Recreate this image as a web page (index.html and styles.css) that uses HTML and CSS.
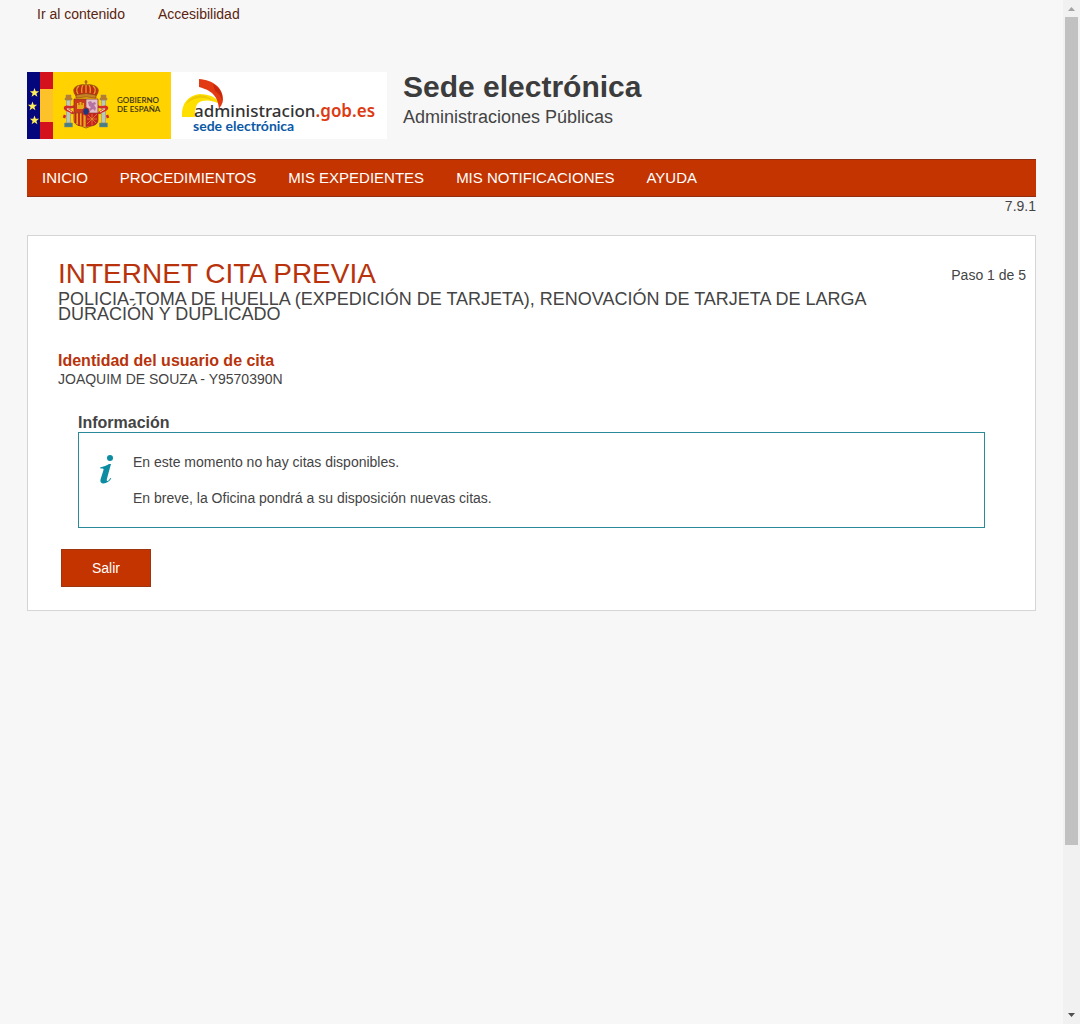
FILE: index.html
```html
<!DOCTYPE html>
<html lang="es">
<head>
<meta charset="utf-8">
<meta name="viewport" content="width=device-width, initial-scale=1">
<title>Sede electrónica - Internet cita previa</title>
<link rel="stylesheet" href="styles.css">
</head>
<body>
<div class="page">
  <nav class="skip-links">
    <a href="#contenido">Ir al contenido</a>
    <a href="#accesibilidad">Accesibilidad</a>
  </nav>

  <header class="site-header">
    <svg class="logo-gobierno" width="144" height="67" viewBox="0 0 144 67" role="img" aria-label="Gobierno de España">
      <rect width="144" height="67" fill="#ffd200"/>
      <rect width="13" height="67" fill="#04077b"/>
      <rect x="13" width="13" height="67" fill="#fdc22a"/>
      <rect x="13" width="13" height="17" fill="#d4121d"/>
      <rect x="13" y="50" width="13" height="17" fill="#d4121d"/>
      <g fill="#ffee5c">
        <path id="star" d="M7.500 16l1.200 3.200 3.400.1-2.700 2.100 1 3.300-2.900-1.900-2.900 1.900 1-3.300-2.700-2.100 3.400-.1z"/>
        <use href="#star" x="-2" y="13.500"/>
        <use href="#star" y="27.500"/>
      </g>
      <g stroke="#8a8a78" stroke-width=".5">
        <path fill="#bcc8bd" d="M39.500 28h4v23h-4zM74.500 28h4v23h-4z"/>
        <path fill="#477e85" d="M37.500 51h8v4h-8zM72.500 51h8v4h-8z"/>
        <path fill="#bd7b26" d="M39 23h5v3h1v2h-7v-2h1zM74 23h5v3h1v2h-7v-2h1z"/>
      </g>
      <g fill="none" stroke="#d42b25" stroke-width="2.500">
        <path d="M48 34c-4 3-10-1-10 2s7 2 8 6M70 34c4 3 10-1 10 2s-7 2-8 6"/>
        <path d="M38 43l-1 3M80 43l1 3"/>
      </g>
      <path d="M40 37l5 3M78 37l-5 3" stroke="#f5dfbc"/>
      <path d="M47 27h12v14H47z" fill="#c93a1d"/>
      <path d="M59 27h12v14H59z" fill="#e3bfca"/>
      <path d="M47 41h12v14l-5-1q-7-1-7-6z" fill="#eba51c"/>
      <path d="M59 41h12v7q0 5-7 6l-5 1z" fill="#c82124"/>
      <path d="M48.500 41v10M52 41v13M55.500 41v13" stroke="#c3231b" stroke-width="1.800"/>
      <path d="M50 37v-6h1.500v2h1v-3h2v3h1v-2H57v6z" fill="#e5a91c"/>
      <path d="M61 30l3-1 1 2 3-1 1 2-2 1 2 3-1 3-2-2-3 2-1-2 2-2-2-1z" fill="#b672a1"/>
      <path d="M60 42l10 10M70 42L60 52M65 42v11M60 47h10" stroke="#df982a" stroke-width=".7"/>
      <path d="M47 27h24v21q0 5-7 6l-5 2-5-2q-7-1-7-6z" fill="none" stroke="#8e3a24" stroke-width=".8"/>
      <path d="M59 27v28M47 41h24" stroke="#8e3a24" stroke-width=".6"/>
      <ellipse cx="59" cy="39.500" rx="3.200" ry="3.800" fill="#1d3978" stroke="#b62932"/>
      <path d="M49 24q-5-7 1-10 5-2 9-1 4-1 9 1 6 3 1 10-10-3-20 0z" fill="#c52a19" stroke="#9a5c12"/>
      <path d="M51 22q-3-5 1-8M55 21q-1-5 1-8M59 21V12M63 21q1-5-1-8M67 22q3-5-1-8" fill="none" stroke="#dda31b" stroke-width="1.300"/>
      <path d="M49 23q10-3 20 0v3q-10-2-20 0z" fill="#c48224" stroke="#904116" stroke-width=".7"/>
      <path d="M59 8v5M57.500 10h3" stroke="#94561a" stroke-width="1.200"/>
      <g class="gobierno-text">
        <text x="90" y="31">GOBIERNO</text>
        <text x="90" y="40">DE ESPAÑA</text>
      </g>
    </svg>
    <svg class="logo-admin" width="216" height="67" viewBox="0 0 216 67" role="img" aria-label="administracion.gob.es sede electrónica">
      <rect width="216" height="67" fill="#fff"/>
      <path d="M11 45C10 32 17 23 29 22q15 0 20 10-10-5-18-3c-7 2-7 9-7 16z" fill="#ffdf00"/>
      <path d="M15 32q13-11 28-3-9-8-18-5-7 2-10 8z" fill="#ecc900"/>
      <path d="M28 7c14 1 24 9 24 20 0 5-3 8-4 10-1-11-5-18-20-22z" fill="#e23a12"/>
      <path d="M42 12c7 4 10 9 9 16q-2-6-7-9z" fill="#c8280d"/>
      <text class="domain" x="23" y="45">administracion<tspan class="domain-end">.gob.es</tspan></text>
      <text class="domain-sub" x="22" y="59">sede electrónica</text>
    </svg>
    <div class="site-name">
      <p class="site-title">Sede electrónica</p>
      <p class="site-subtitle">Administraciones Públicas</p>
    </div>
  </header>

  <nav class="main-nav">
    <a href="#inicio">INICIO</a>
    <a href="#procedimientos">PROCEDIMIENTOS</a>
    <a href="#expedientes">MIS EXPEDIENTES</a>
    <a href="#notificaciones">MIS NOTIFICACIONES</a>
    <a href="#ayuda">AYUDA</a>
  </nav>
  <p class="version">7.9.1</p>

  <main class="panel" id="contenido">
    <div class="panel-head">
      <div class="panel-titles">
        <h1>INTERNET CITA PREVIA</h1>
        <h2>POLICIA-TOMA DE HUELLA (EXPEDICIÓN DE TARJETA), RENOVACIÓN DE TARJETA DE LARGA DURACIÓN Y DUPLICADO</h2>
      </div>
      <p class="step">Paso 1 de 5</p>
    </div>
    <section class="identity">
      <h3>Identidad del usuario de cita</h3>
      <p>JOAQUIM DE SOUZA - Y9570390N</p>
    </section>
    <section class="info">
      <h3>Información</h3>
      <div class="info-box">
        <svg class="info-icon" width="16" height="30" viewBox="0 0 16 30" aria-hidden="true">
          <g fill="#0b8ca3">
            <circle cx="11" cy="3" r="3"/>
            <path d="M1 12.500c3.500-.8 7-2 9-3.500h2L8 23.500c-.5 1.800-.3 2.400.4 2.400 1 0 2.200-1.400 2.900-2.900l1 .6C10.300 26.700 7.700 28.500 4.500 28.500 1.900 28.500.9 26.700 1.500 24.500l3-9.500c.4-1.400-.5-1.900-3-1.400z"/>
          </g>
        </svg>
        <div class="info-text">
          <p>En este momento no hay citas disponibles.</p>
          <p>En breve, la Oficina pondrá a su disposición nuevas citas.</p>
        </div>
      </div>
    </section>
    <button class="exit" type="button">Salir</button>
  </main>
</div>
<div class="scrollbar" aria-hidden="true">
  <svg width="17" height="17" viewBox="0 0 17 17"><path d="M5 11l3.500-4 3.500 4z" fill="#a3a3a3"/></svg>
  <div class="scroll-track"><div class="scroll-thumb"></div><div class="scroll-rest"></div></div>
  <svg width="17" height="17" viewBox="0 0 17 17"><path d="M5 6h7l-3.500 4z" fill="#505050"/></svg>
</div>
</body>
</html>
```

FILE: styles.css
```css
* {
  box-sizing: border-box;
}

body {
  margin: 0;
  min-height: 100vh;
  display: flex;
  background: #f7f7f7;
  color: #444;
  font: 14px/18px "Liberation Sans", Arial, sans-serif;
}

h1, h2, h3, p {
  margin: 0;
}

a {
  text-decoration: none;
}

.page {
  flex: 1;
  min-width: 0;
  padding: 5px 27px 24px;
}

.skip-links {
  display: flex;
  gap: 33px;
  padding-left: 10px;
}

.skip-links a {
  color: #5a2410;
}

.site-header {
  display: flex;
  margin: 49px 0 20px;
}

.logo-gobierno,
.logo-admin {
  flex: none;
}

.gobierno-text {
  font: 600 8px Lato, sans-serif;
  fill: #3b3210;
}

.domain {
  font: 500 17px "Noto Sans", sans-serif;
  fill: #333;
}

.domain-end {
  font-weight: 600;
  fill: #dc3b13;
}

.domain-sub {
  font: 700 14px Lato, sans-serif;
  fill: #0b59a6;
}

.site-name {
  margin-left: 16px;
}

.site-title {
  font-size: 30px;
  font-weight: bold;
  line-height: 30px;
  color: #3c3c3c;
}

.site-subtitle {
  font-size: 18px;
  line-height: 30px;
}

.main-nav {
  display: flex;
  flex-wrap: wrap;
  gap: 32px;
  padding: 0 15px;
  background: #c33400;
  border: solid #8f2f10;
  border-width: 1px 0;
}

.main-nav a {
  color: #fff;
  font-size: 15px;
  line-height: 36px;
}

.version {
  text-align: right;
}

.panel {
  margin-top: 20px;
  padding: 20px 9px 23px 30px;
  background: #fff;
  border: 1px solid #d5d5d5;
}

.panel-head {
  display: flex;
  justify-content: space-between;
  gap: 24px;
}

.panel-titles {
  max-width: 820px;
}

.panel h1 {
  font-size: 28px;
  font-weight: normal;
  line-height: 36px;
  color: #b8330b;
}

.panel h2 {
  font-size: 18px;
  font-weight: normal;
  line-height: 15px;
}

.step {
  padding-top: 10px;
  white-space: nowrap;
}

.identity {
  margin-top: 30px;
}

.panel h3 {
  font-size: 16px;
  line-height: 18px;
}

.identity h3 {
  color: #b8330b;
}

.info {
  margin: 26px 41px 21px 20px;
}

.info-box {
  display: flex;
  gap: 18px;
  padding: 20px;
  border: 1px solid #2b8a98;
}

.info-icon {
  margin-top: 2px;
}

.info-text {
  display: grid;
  gap: 18px;
}

.exit {
  display: block;
  margin-left: 3px;
  padding: 0 30px;
  background: #c33400;
  border: 1px solid #9b3512;
  color: #fff;
  font: 14px/36px "Liberation Sans", Arial, sans-serif;
}

.scrollbar {
  display: flex;
  flex: 0 0 17px;
  flex-direction: column;
  height: 100vh;
  background: #f1f1f1;
}

.scroll-track {
  display: flex;
  flex: 1;
  flex-direction: column;
  padding: 0 2px;
}

.scroll-thumb {
  flex: 46;
  background: #c1c1c1;
}

.scroll-rest {
  flex: 9;
}
```
